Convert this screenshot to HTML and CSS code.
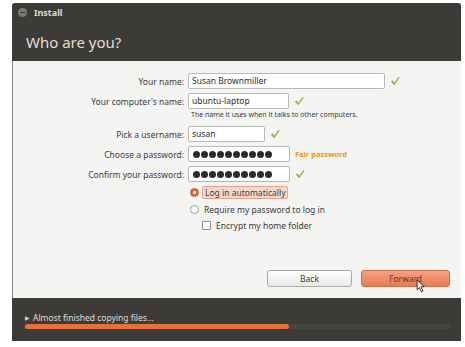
FILE: index.html
```html
<!DOCTYPE html>
<html lang="en">
<head>
  <meta charset="UTF-8" />
  <title>Install</title>
  <link rel="stylesheet" href="styles.css">
</head>
<body>
  <div class="window">
    <div class="titlebar">
      <span class="close-btn"></span>
      <span class="title">Install</span>
    </div>
    <div class="header">Who are you?</div>

    <div class="content">
      <div class="form">
        <div class="row">
          <label class="label">Your name:</label>
          <div class="field long">Susan Brownmiller</div>
          <svg class="check" viewBox="0 0 12 12"><path d="M1 6.5 L3 5 L5 8 L10.5 1 L11.5 2 L5 11 Z" /></svg>
        </div>
        <div class="row">
          <label class="label">Your computer's name:</label>
          <div class="field mid">ubuntu-laptop</div>
          <svg class="check" viewBox="0 0 12 12"><path d="M1 6.5 L3 5 L5 8 L10.5 1 L11.5 2 L5 11 Z" /></svg>
        </div>
        <div class="hint">The name it uses when it talks to other computers.</div>
        <div class="row">
          <label class="label">Pick a username:</label>
          <div class="field short">susan</div>
          <svg class="check" viewBox="0 0 12 12"><path d="M1 6.5 L3 5 L5 8 L10.5 1 L11.5 2 L5 11 Z" /></svg>
        </div>
        <div class="row">
          <label class="label">Choose a password:</label>
          <div class="field mid dots">
            <i></i><i></i><i></i><i></i><i></i><i></i><i></i><i></i><i></i><i></i>
          </div>
          <span class="strength">Fair password</span>
        </div>
        <div class="row">
          <label class="label">Confirm your password:</label>
          <div class="field mid dots">
            <i></i><i></i><i></i><i></i><i></i><i></i><i></i><i></i><i></i><i></i>
          </div>
          <svg class="check" viewBox="0 0 12 12"><path d="M1 6.5 L3 5 L5 8 L10.5 1 L11.5 2 L5 11 Z" /></svg>
        </div>

        <div class="options">
          <div class="option">
            <span class="radio on"></span>
            <span class="opt-text focus">Log in automatically</span>
          </div>
          <div class="option">
            <span class="radio"></span>
            <span class="opt-text">Require my password to log in</span>
          </div>
          <div class="option sub">
            <span class="checkbox"></span>
            <span class="opt-text">Encrypt my home folder</span>
          </div>
        </div>
      </div>

      <div class="buttons">
        <button class="btn">Back</button>
        <button class="btn primary">Forward</button>
      </div>
    </div>

    <div class="footer">
      <div class="status"><span class="arrow">▶</span>Almost finished copying files...</div>
      <div class="progress"><div class="progress-fill" style="width: 62%"></div></div>
    </div>
  </div>

  <svg class="cursor" viewBox="0 0 12 18"><path d="M1 1 L1 14 L4 11 L6.5 16.5 L8.5 15.5 L6 10 L10 10 Z" /></svg>
</body>
</html>
```

FILE: styles.css
```css
body {
  margin: 0;
  background-color: #ffffff;
  font-family: 'Noto Sans', 'Open Sans', sans-serif;
  font-size: 8.5px;
  color: #3c3c3c;
}

.window {
  margin: 3px 0 0 12px;
  width: 449px;
  height: 338px;
  background-color: #3c3b37;
  border-radius: 3px 3px 0 0;
  display: flex;
  flex-direction: column;
}

.titlebar {
  height: 19px;
  display: flex;
  align-items: center;
  padding-left: 6px;
  gap: 7px;
}

.close-btn {
  width: 9px;
  height: 9px;
  border-radius: 50%;
  background-color: #7b7a75;
  position: relative;
}

.close-btn::after {
  content: '';
  position: absolute;
  left: 2px;
  top: 4px;
  width: 5px;
  height: 1px;
  background-color: #3c3b37;
}

.title {
  color: #dfdbd2;
  font-weight: bold;
  font-size: 9px;
}

.header {
  height: 39px;
  padding-left: 14px;
  display: flex;
  align-items: center;
  color: #e2ded6;
  font-size: 15px;
}

.content {
  height: 237px;
  background-color: #f4f4f2;
  border-left: 1px solid #8a8a86;
  display: flex;
  flex-direction: column;
  justify-content: space-between;
}

.form {
  padding-top: 12px;
}

.row {
  display: flex;
  align-items: center;
  height: 16px;
  margin-bottom: 4px;
}

.label {
  width: 171px;
  padding-right: 4px;
  text-align: right;
  color: #3c3c3c;
}

.field {
  height: 14px;
  line-height: 14px;
  padding-left: 3px;
  background-color: #ffffff;
  border: 1px solid #b8b8b4;
  border-radius: 2px;
  color: #2e2e2e;
}

.field.long { width: 192px; }
.field.mid { width: 96px; }
.field.short { width: 72px; }

.field.dots {
  display: flex;
  align-items: center;
  gap: 1px;
  padding-left: 4px;
}

.dots i {
  width: 7px;
  height: 7px;
  border-radius: 50%;
  background-color: #2b2b2b;
}

.check {
  width: 10px;
  height: 10px;
  margin-left: 5px;
  fill: #8fb83a;
}

.strength {
  margin-left: 5px;
  color: #e8961e;
  font-weight: bold;
  font-size: 7.5px;
}

.hint {
  margin: -3px 0 4px 178px;
  height: 12px;
  font-size: 7px;
  color: #3c3c3c;
}

.options {
  padding-left: 177px;
  display: flex;
  flex-direction: column;
  gap: 4px;
}

.option {
  display: flex;
  align-items: center;
  gap: 3px;
  height: 13px;
}

.option.sub {
  padding-left: 12px;
  margin-top: -1px;
}

.radio {
  width: 7px;
  height: 7px;
  border-radius: 50%;
  border: 1px solid #9a9a96;
  background-color: #ffffff;
}

.radio.on {
  border-color: #c0502c;
  background: radial-gradient(circle, #ffffff 0, #ffffff 1px, #e8683c 2px);
}

.checkbox {
  width: 7px;
  height: 7px;
  border: 1px solid #8a8a86;
  border-radius: 1px;
  background-color: #ffffff;
}

.opt-text {
  padding: 0 2px;
}

.opt-text.focus {
  background-color: #f6d9cd;
  border: 1px solid #e8a38a;
  border-radius: 2px;
}

.buttons {
  display: flex;
  justify-content: flex-end;
  gap: 9px;
  padding: 0 11px 11px 0;
}

.btn {
  font-family: 'Noto Sans', 'Open Sans', sans-serif;
  font-size: 8.5px;
  width: 85px;
  height: 17px;
  padding: 0;
  color: #3c3c3c;
  background: linear-gradient(#ffffff, #e8e8e6);
  border: 1px solid #aaaaa6;
  border-radius: 3px;
}

.btn.primary {
  width: 89px;
  color: #6a3420;
  background: linear-gradient(#f6a080, #ea7a52);
  border-color: #d0704c;
}

.footer {
  flex: 1;
  padding: 14px 0 0 13px;
}

.status {
  color: #e0ddd6;
  font-size: 8.5px;
  display: flex;
  align-items: center;
  gap: 3px;
}

.arrow {
  font-size: 6px;
  color: #d8d5ce;
}

.progress {
  margin-top: 1px;
  width: 425px;
  height: 5px;
  background-color: #46453f;
  border-radius: 3px;
}

.progress-fill {
  height: 100%;
  background-color: #e8703c;
  border-radius: 3px;
}

.cursor {
  position: absolute;
  left: 416px;
  top: 279px;
  width: 10px;
  height: 14px;
  fill: #ffffff;
  stroke: #000000;
  stroke-width: 1;
}
```
